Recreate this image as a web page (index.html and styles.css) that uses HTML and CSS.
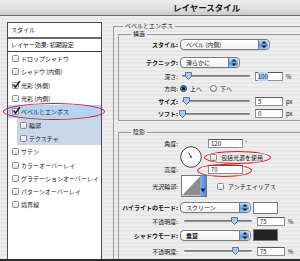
FILE: index.html
```html
<!DOCTYPE html>
<html lang="ja">
<head>
<meta charset="utf-8">
<title>レイヤースタイル</title>
<link rel="stylesheet" href="styles.css">
</head>
<body>
<div class="dialog">
  <div class="titlebar">レイヤースタイル</div>
  <div class="main">
    <div class="side">
      <div class="side-head">スタイル</div>
      <div class="side-sep"></div>
      <div class="side-preset">レイヤー効果: 初期設定</div>
      <ul class="fx-list">
        <li class="fx"><span class="cb"></span>ドロップシャドウ</li>
        <li class="fx"><span class="cb"></span>シャドウ (内側)</li>
        <li class="fx"><span class="cb"><svg class="check" viewBox="0 0 9 9" width="9" height="9"><path d="M1.5 4.5 L3.5 7 L8 1" fill="none" stroke="#1a1a1a" stroke-width="1.4"/></svg></span>光彩 (外側)</li>
        <li class="fx"><span class="cb"></span>光彩 (内側)</li>
        <li class="fx sel"><span class="cb"><svg class="check" viewBox="0 0 9 9" width="9" height="9"><path d="M1.5 4.5 L3.5 7 L8 1" fill="none" stroke="#1a1a1a" stroke-width="1.4"/></svg></span>ベベルとエンボス</li>
        <li class="fx sub"><span class="cb"></span>輪郭</li>
        <li class="fx sub"><span class="cb"></span>テクスチャ</li>
        <li class="fx"><span class="cb"></span>サテン</li>
        <li class="fx"><span class="cb"></span>カラーオーバーレイ</li>
        <li class="fx"><span class="cb"></span>グラデーションオーバーレイ</li>
        <li class="fx"><span class="cb"></span>パターンオーバーレイ</li>
        <li class="fx"><span class="cb"></span>境界線</li>
      </ul>
    </div>

    <fieldset class="group outer">
      <legend class="legend-outer">ベベルとエンボス</legend>

      <fieldset class="group inner structure">
        <legend class="legend-inner">構造</legend>
        <div class="row r-style">
          <span class="lbl bold">スタイル:</span>
          <div class="popup w-style"><span>ベベル (内側)</span><span class="arrows"><svg viewBox="0 0 8 9" width="8" height="9"><path d="M4 1 L6.5 3.6 H1.5Z M4 8 L6.5 5.4 H1.5Z" fill="#0d1e3a"/></svg></span></div>
        </div>
        <div class="row r-tech">
          <span class="lbl bold">テクニック:</span>
          <div class="popup w-tech"><span>滑らかに</span><span class="arrows"><svg viewBox="0 0 8 9" width="8" height="9"><path d="M4 1 L6.5 3.6 H1.5Z M4 8 L6.5 5.4 H1.5Z" fill="#0d1e3a"/></svg></span></div>
        </div>
        <div class="row r-slide">
          <span class="lbl">深さ:</span>
          <div class="slider"><span class="thumb" style="left:3px"><svg viewBox="0 0 7 8" width="7" height="8"><path d="M0.5 0.5 H6.5 V4.5 L3.5 7.5 L0.5 4.5Z" fill="#a9c7e8" stroke="#3d5e86" stroke-width="0.8"/></svg></span></div>
          <span class="num"><span class="hl">100</span></span><span class="unit">%</span>
        </div>
        <div class="row r-slide">
          <span class="lbl">方向:</span>
          <span class="radio on"></span><span class="rtext">上へ</span>
          <span class="radio"></span><span class="rtext">下へ</span>
        </div>
        <div class="row r-slide">
          <span class="lbl bold">サイズ:</span>
          <div class="slider"><span class="thumb" style="left:1px"><svg viewBox="0 0 7 8" width="7" height="8"><path d="M0.5 0.5 H6.5 V4.5 L3.5 7.5 L0.5 4.5Z" fill="#a9c7e8" stroke="#3d5e86" stroke-width="0.8"/></svg></span></div>
          <span class="num">5</span><span class="unit">px</span>
        </div>
        <div class="row r-slide">
          <span class="lbl bold">ソフト:</span>
          <div class="slider"><span class="thumb" style="left:-3px"><svg viewBox="0 0 7 8" width="7" height="8"><path d="M0.5 0.5 H6.5 V4.5 L3.5 7.5 L0.5 4.5Z" fill="#a9c7e8" stroke="#3d5e86" stroke-width="0.8"/></svg></span></div>
          <span class="num">0</span><span class="unit">px</span>
        </div>
      </fieldset>

      <fieldset class="group inner shading">
        <legend class="legend-inner">陰影</legend>
        <div class="angle">
          <span class="lbl a-lbl1">角度:</span>
          <span class="dial"><svg viewBox="0 0 22 22" width="22" height="22"><circle cx="11" cy="11" r="10.3" fill="#f7f7f7" stroke="#4a4a4a" stroke-width="1"/><path d="M11 11 L8.6 6.8" stroke="#333" stroke-width="0.9"/><path d="M10 11 H12 M11 10 V12" stroke="#333" stroke-width="0.7"/></svg></span>
          <span class="a-in1"><span class="num w-ang">120</span><span class="unit deg">°</span></span>
          <span class="a-cb"><span class="cb"></span><span class="cbtext">包括光源を使用</span></span>
          <span class="lbl a-lbl2">高度:</span>
          <span class="a-in2"><span class="num w-ang">70</span><span class="unit deg">°</span></span>
        </div>
        <div class="row r-contour">
          <span class="lbl">光沢輪郭:</span>
          <span class="contour"><svg viewBox="0 0 19 20" width="19" height="20" class="curve"><path d="M0 20 L19 0 V20Z" fill="#8c8c8c"/></svg><span class="cdrop"><svg viewBox="0 0 6 5" width="6" height="5"><path d="M0.5 0.5 H5.5 L3 4.5Z" fill="#0d1e3a"/></svg></span></span>
          <span class="cb cb-aa"></span><span class="cbtext">アンチエイリアス</span>
        </div>
        <div class="row r-mode1">
          <span class="lbl bold">ハイライトのモード:</span>
          <div class="popup w-mode"><span>スクリーン</span><span class="arrows"><svg viewBox="0 0 8 9" width="8" height="9"><path d="M4 1 L6.5 3.6 H1.5Z M4 8 L6.5 5.4 H1.5Z" fill="#0d1e3a"/></svg></span></div>
          <span class="swatch white"></span>
        </div>
        <div class="row r-op1">
          <span class="lbl">不透明度:</span>
          <div class="slider"><span class="thumb" style="left:47px"><svg viewBox="0 0 7 8" width="7" height="8"><path d="M0.5 0.5 H6.5 V4.5 L3.5 7.5 L0.5 4.5Z" fill="#a9c7e8" stroke="#3d5e86" stroke-width="0.8"/></svg></span></div>
          <span class="num">75</span><span class="unit">%</span>
        </div>
        <div class="row r-mode2">
          <span class="lbl bold">シャドウモード:</span>
          <div class="popup w-mode"><span class="bold">乗算</span><span class="arrows"><svg viewBox="0 0 8 9" width="8" height="9"><path d="M4 1 L6.5 3.6 H1.5Z M4 8 L6.5 5.4 H1.5Z" fill="#0d1e3a"/></svg></span></div>
          <span class="swatch black"></span>
        </div>
        <div class="row r-op2">
          <span class="lbl">不透明度:</span>
          <div class="slider"><span class="thumb" style="left:48px"><svg viewBox="0 0 7 8" width="7" height="8"><path d="M0.5 0.5 H6.5 V4.5 L3.5 7.5 L0.5 4.5Z" fill="#a9c7e8" stroke="#3d5e86" stroke-width="0.8"/></svg></span></div>
          <span class="num">75</span><span class="unit">%</span>
        </div>
      </fieldset>
    </fieldset>
  </div>
  <div class="bottom-bar"></div>

  <span class="mark mark-bevel"></span>
  <span class="mark mark-global"></span>
  <span class="mark mark-alt"></span>
</div>
</body>
</html>
```
FILE: styles.css
```css
* { box-sizing: border-box; }
html, body { margin: 0; padding: 0; }
body {
  width: 300px;
  height: 261px;
  overflow: hidden;
  font-family: "Noto Sans CJK JP", "Noto Sans", sans-serif;
  font-size: 6px;
  color: #141414;
}
.bold { font-weight: bold; }

.dialog {
  position: relative;
  width: 300px;
  height: 261px;
  display: flex;
  flex-direction: column;
  overflow: hidden;
  background: repeating-linear-gradient(#eeeeee 0 2px, #e7e7e7 2px 4px);
}

.titlebar {
  height: 16px;
  flex: none;
  border-bottom: 1px solid #6a6a6a;
  background: linear-gradient(#ededed, #e0e0e0 55%, #cbcbcb);
  padding-left: 173px;
  font-size: 8.5px;
  font-weight: bold;
  line-height: 15px;
  color: #1c1c1c;
}

.main {
  flex: 1;
  min-height: 0;
  display: flex;
  align-items: stretch;
  overflow: hidden;
}

/* ---------- left style list ---------- */
.side {
  flex: none;
  width: 95px;
  margin: 6px 0 0 7px;
  border: 1px solid #4a4a4a;
  border-bottom: none;
  background: #fff;
}
.side-head {
  height: 14px;
  line-height: 14px;
  padding-left: 3px;
}
.side-sep {
  height: 2px;
  background: #6d6865;
}
.side-preset {
  height: 13px;
  line-height: 12px;
  padding-left: 3px;
  border-bottom: 1px solid #3a3a3a;
}
.fx-list {
  list-style: none;
  margin: 0;
  padding: 0;
}
.fx {
  height: 13.3px;
  display: flex;
  align-items: center;
  gap: 2px;
  padding-left: 4px;
  white-space: nowrap;
}
.fx.sel { background: #b4d4f3; }
.fx.sub {
  margin-left: 9px;
  padding-left: 3px;
  background: #c7d7e9;
}

.cb {
  position: relative;
  flex: none;
  width: 7px;
  height: 7px;
  border: 1px solid #8a8a8a;
  border-radius: 1.5px;
  background: linear-gradient(#ffffff, #dcdcdc);
}
.check {
  position: absolute;
  left: -1px;
  top: -3px;
}

/* ---------- group boxes ---------- */
.group {
  margin: 0;
  padding: 0;
  border: 1px solid #9b9b9b;
  min-width: 0;
}
.outer {
  flex: none;
  width: 240px;
  margin: 6px 0 0 11px;
  padding: 0 0 0 4px;
  border-bottom: none;
}
.legend-outer,
.legend-inner {
  padding: 0 2px;
  line-height: 8px;
  font-size: 6px;
}
.legend-outer { margin-left: 5px; }
.legend-inner { margin-left: 12px; }

.inner {
  border-right: none;
}
.structure { margin: 0; }
.shading {
  margin-top: 7px;
  border-bottom: none;
  height: 200px;
}

.row {
  display: flex;
  align-items: center;
  height: 12px;
  white-space: nowrap;
}
.lbl {
  flex: none;
  width: 59px;
  text-align: right;
  margin-right: 2px;
}
.r-tech { margin-top: 6px; }
.r-slide { height: 12.5px; }
.r-tech + .r-slide { margin-top: 2px; }

/* popup buttons */
.popup {
  flex: none;
  height: 11px;
  display: flex;
  align-items: center;
  padding-left: 5px;
  border: 1px solid #7b7b7b;
  border-radius: 4px;
  background: linear-gradient(#ffffff, #f1f1f1);
  box-shadow: 0 1px 0 rgba(0,0,0,0.08);
}
.w-style { width: 90px; }
.w-tech { width: 60px; }
.w-mode { width: 71px; }
.arrows {
  margin-left: auto;
  margin-right: 1px;
  width: 10px;
  height: 9px;
  display: flex;
  align-items: center;
  justify-content: center;
  border-left: 1px solid #5a7fb0;
  border-radius: 0 3px 3px 0;
  background: linear-gradient(#c3ddf7, #6fa7e6 50%, #4e8fdc 55%, #9cc8f2);
}

/* sliders */
.slider {
  position: relative;
  flex: none;
  width: 68px;
  height: 2px;
  margin-left: 2px;
  border-radius: 1px;
  background: linear-gradient(#6c6c6c, #a6a6a6);
}
.thumb {
  position: absolute;
  top: -3px;
  width: 7px;
  height: 8px;
  display: block;
}
.thumb svg { display: block; }

.num {
  flex: none;
  width: 28px;
  height: 9px;
  margin-left: 5px;
  padding-left: 2px;
  border: 1px solid #8e8e8e;
  border-top-color: #5a5a5a;
  background: #fff;
  line-height: 7px;
}
.hl { background: #b5d3fb; }
.unit { margin-left: 3px; }

/* radios */
.radio {
  flex: none;
  width: 7px;
  height: 7px;
  border-radius: 50%;
  border: 1px solid #6a6a6a;
  background: linear-gradient(#ffffff, #dedede);
}
.radio.on {
  border-color: #1d3555;
  background: radial-gradient(circle, #0e1a2c 0 1.3px, #4d7fc0 1.8px, #8fb7e6 3px);
}
.rtext { margin: 0 8px 0 3px; }

/* shading: angle block */
.angle {
  display: grid;
  grid-template-columns: 59px 30px auto;
  grid-template-rows: 10px 4px 10px 2px 10px;
  margin-top: 2px;
  white-space: nowrap;
}
.a-lbl1 { grid-column: 1; grid-row: 1; align-self: center; }
.a-lbl2 { grid-column: 1; grid-row: 5; align-self: center; }
.dial {
  grid-column: 2;
  grid-row: 1 / 6;
  margin: 8px 0 0 2px;
  width: 22px;
  height: 22px;
}
.dial svg { display: block; }
.a-in1 { grid-column: 3; grid-row: 1; display: flex; align-items: center; }
.a-cb { grid-column: 3; grid-row: 3; display: flex; align-items: center; padding-left: 2px; }
.a-in2 { grid-column: 3; grid-row: 5; display: flex; align-items: center; }
.w-ang { width: 35px; margin-left: 0; }
.deg { margin-left: 2px; align-self: flex-start; }
.cbtext { margin-left: 4px; }

.r-contour {
  height: 22px;
  margin-top: 1px;
}
.contour {
  flex: none;
  display: flex;
  width: 26px;
  height: 22px;
  margin-left: 1px;
  border: 1px solid #777;
  background: #fff;
}
.curve { display: block; }
.cdrop {
  width: 6px;
  height: 20px;
  display: flex;
  align-items: flex-end;
  justify-content: center;
  padding-bottom: 3px;
  background: linear-gradient(90deg, #7fb0ea, #4a8ad8);
}
.cb-aa { margin-left: 10px; }

.r-mode1 { margin-top: 4.5px; }
.r-op1 { margin-top: 2.5px; height: 10px; }
.r-mode2 { margin-top: 3px; }
.r-op2 { margin-top: 5px; height: 10px; }
.r-op1 .slider, .r-op2 .slider { margin-left: 4px; }

.swatch {
  flex: none;
  width: 25px;
  height: 12px;
  margin-left: 2px;
  border: 1px solid #7a7a7a;
}
.swatch.white { background: #fff; }
.swatch.black { background: #232323; }

.bottom-bar {
  flex: none;
  height: 2px;
  background: #2b2b2b;
}

/* red annotation ellipses */
.mark {
  position: absolute;
  border: 1.5px solid #e3141c;
  border-radius: 50%;
}
.mark-bevel { left: 3px; top: 103px; width: 102px; height: 17px; }
.mark-global { left: 204px; top: 151px; width: 67px; height: 13px; }
.mark-alt { left: 197px; top: 164px; width: 55px; height: 13px; }
```
